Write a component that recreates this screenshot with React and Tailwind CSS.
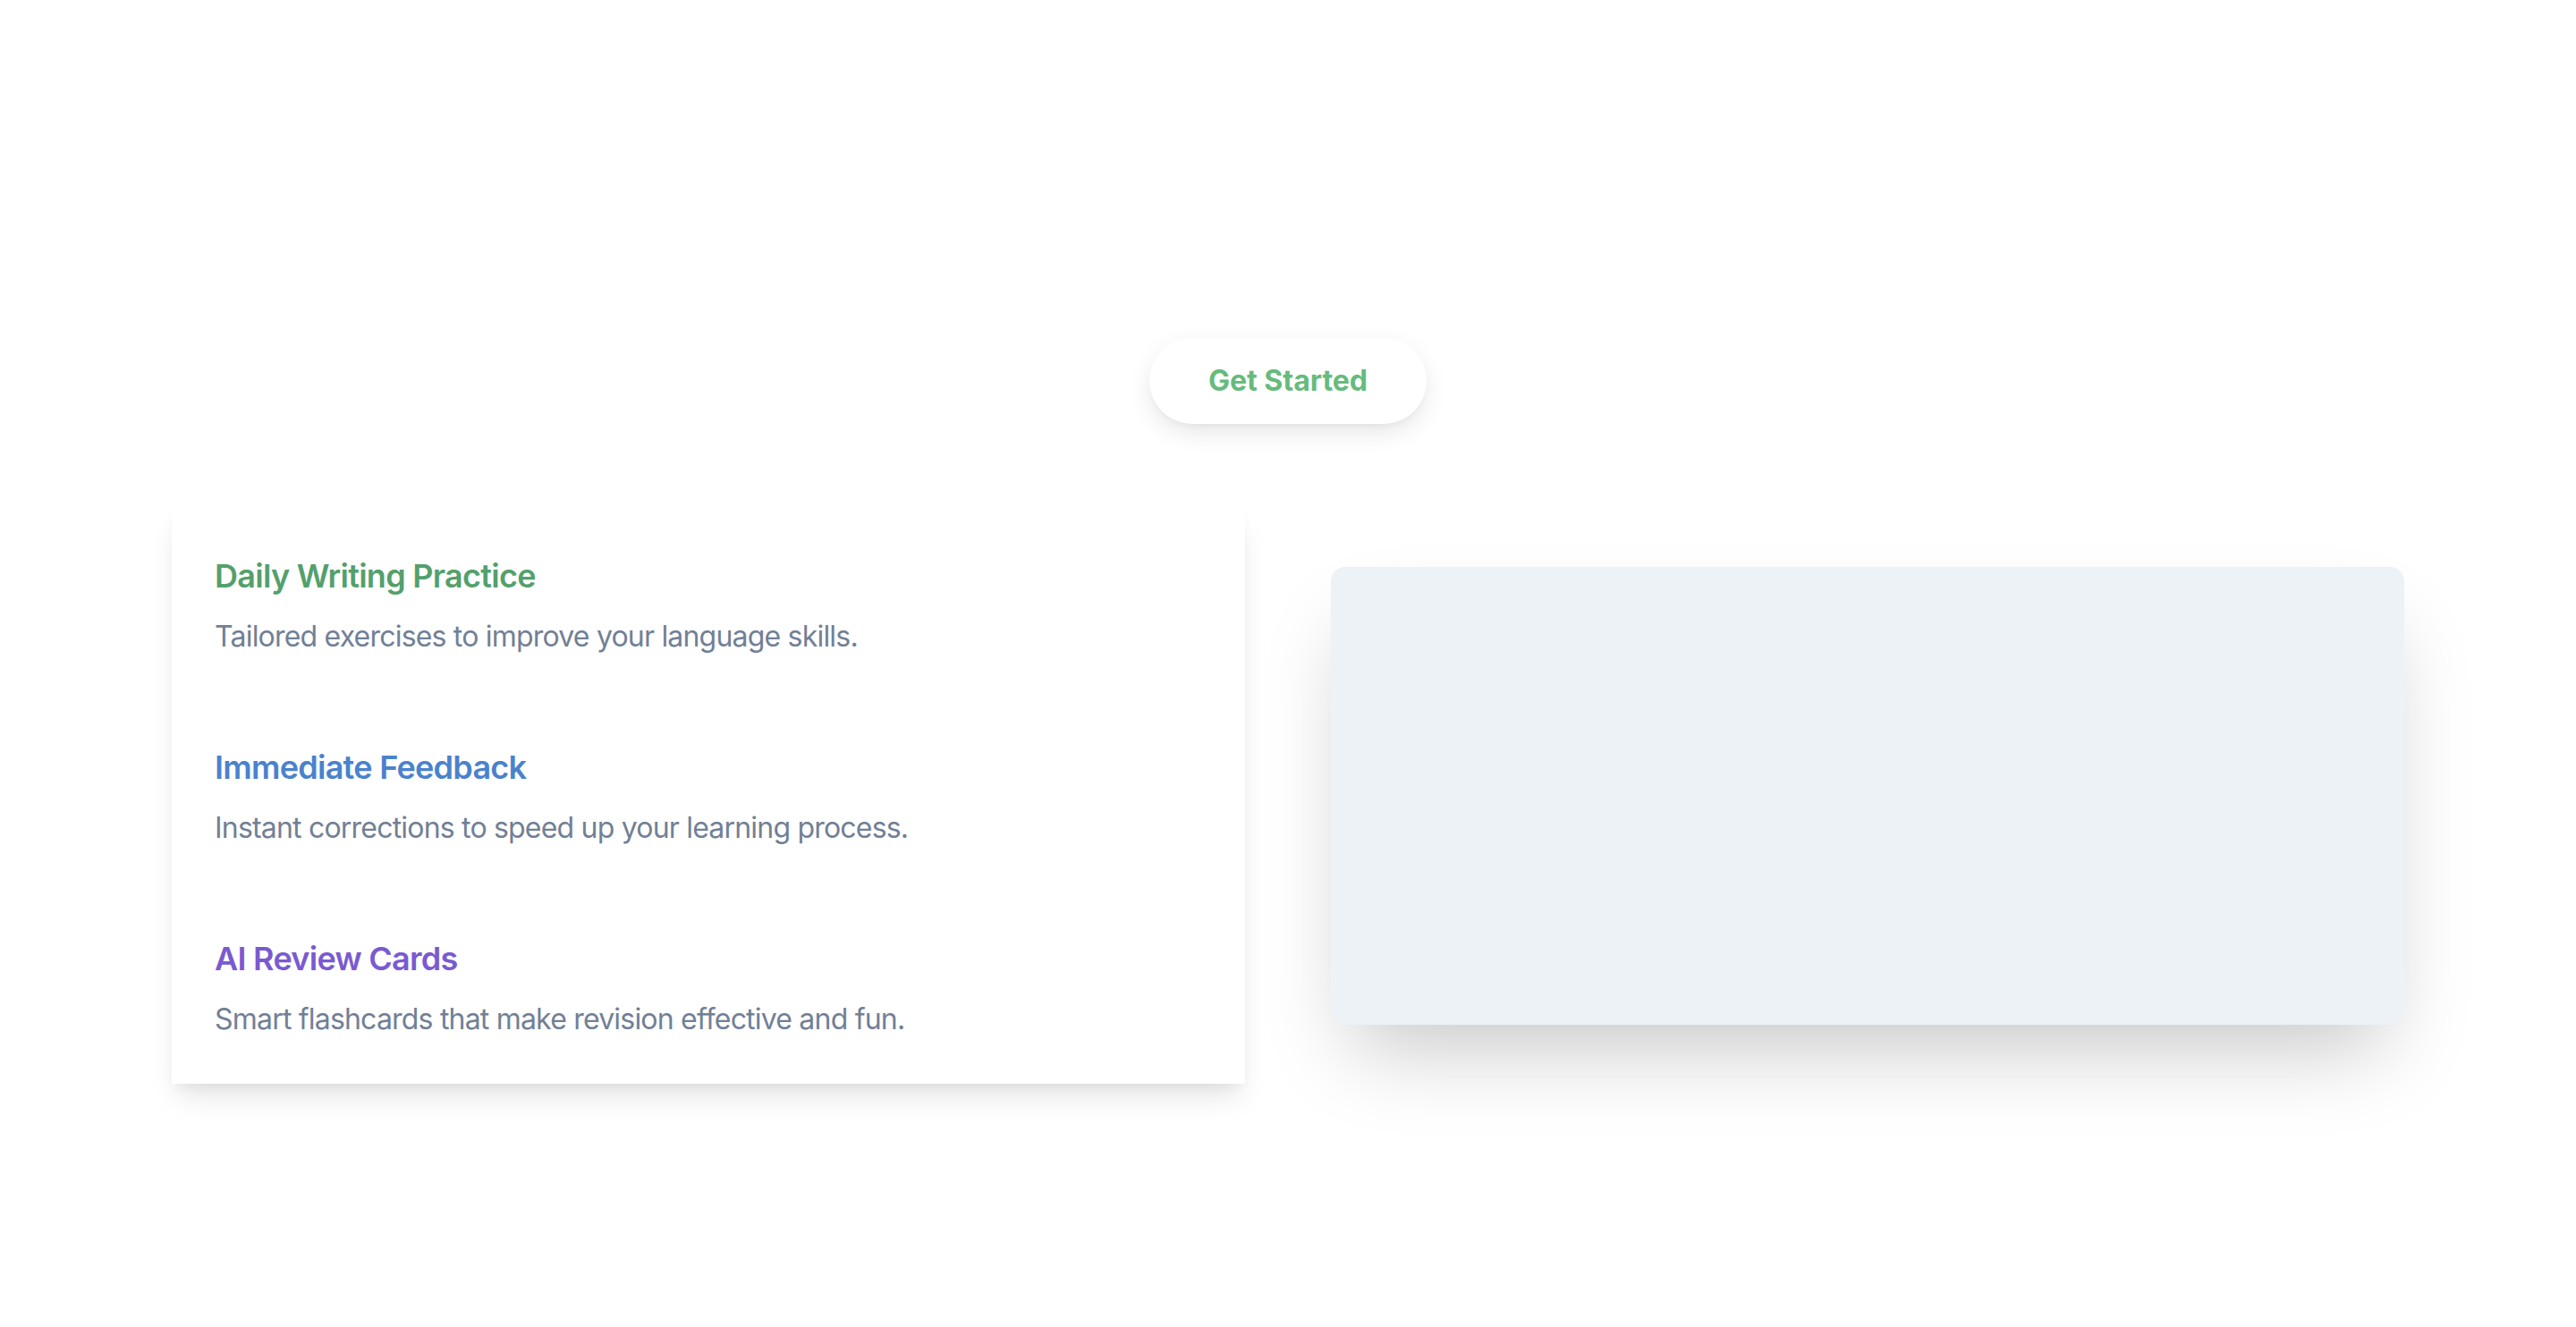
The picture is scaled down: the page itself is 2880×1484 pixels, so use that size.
import React from 'react';

const features = [
  { title: 'Daily Writing Practice', text: 'Tailored exercises to improve your language skills.', color: 'text-[#54a06c]' },
  { title: 'Immediate Feedback', text: 'Instant corrections to speed up your learning process.', color: 'text-[#4a82cc]' },
  { title: 'AI Review Cards', text: 'Smart flashcards that make revision effective and fun.', color: 'text-[#7a5ad0]' },
];

export default function App() {
  return (
    <div className="min-h-screen bg-white pt-[378px] font-['Inter','Liberation_Sans',sans-serif]">
      <div className="flex justify-center">
        <button className="rounded-full bg-white px-[66px] py-6 text-[32px] leading-[48px] font-bold text-[#66bb7d] shadow-[0_10px_30px_-4px_rgba(0,0,0,0.12),0_4px_10px_-4px_rgba(0,0,0,0.06)]">
          Get Started
        </button>
      </div>

      <div className="mx-auto mt-[94px] grid w-[2496px] grid-cols-2 items-center gap-[96px]">
        <div className="flex flex-col gap-[94px] bg-white p-12 shadow-[0_20px_30px_-6px_rgba(0,0,0,0.1),0_8px_12px_-4px_rgba(0,0,0,0.05)]">
          {features.map((f) => (
            <div key={f.title}>
              <h3 className={`mb-4 text-[36px] leading-[56px] font-semibold tracking-[-0.02em] ${f.color}`}>{f.title}</h3>
              <p className="text-[32px] leading-[48px] tracking-[-0.025em] text-[#718096]">{f.text}</p>
            </div>
          ))}
        </div>

        <div className="h-[512px] rounded-2xl bg-[#edf2f7] shadow-[0_50px_90px_-24px_rgba(0,0,0,0.22)]" />
      </div>
    </div>
  );
}
